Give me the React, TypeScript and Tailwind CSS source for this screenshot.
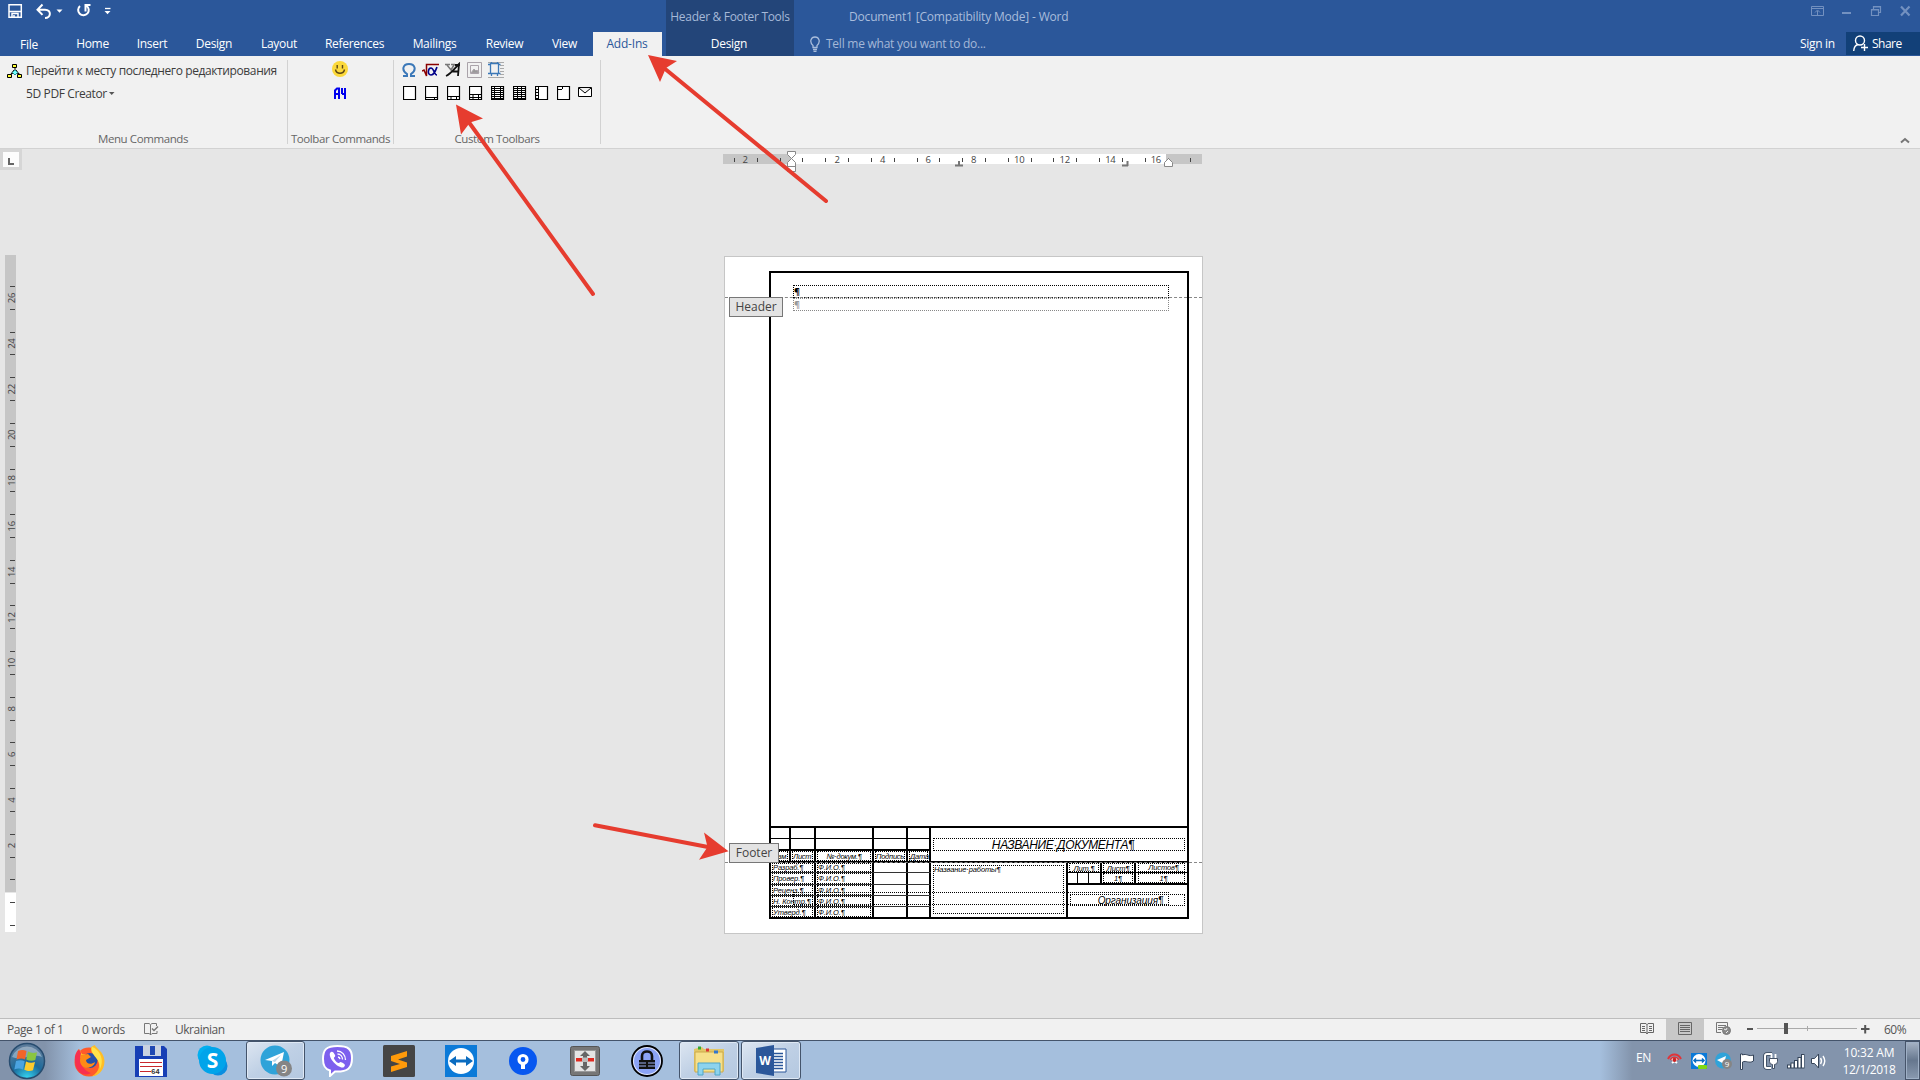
import React from "react";

const UI = "font-['Open_Sans',sans-serif] text-[12px] leading-4 tracking-[-0.3px]";

const tabs: [string, string][] = [
  ["File", "w-[58px] pt-px"],
  ["Home", "w-[68px] pl-px"],
  ["Insert", "w-[52px]"],
  ["Design", "w-[72px]"],
  ["Layout", "w-[58px]"],
  ["References", "w-[93px]"],
  ["Mailings", "w-[67px]"],
  ["Review", "w-[73px]"],
  ["View", "w-[46px] pl-px"],
];

function QuickAccess() {
  return (
    <svg width="120" height="32" className="block shrink-0" fill="none" stroke="#fff">
      <path d="M9 4.700h12.300v12.600H9zM9 11.500h12.300M12 17v-3.500h6V17M14 15v2" strokeWidth="1.500" />
      <path d="M38.500 9.700h6.500c7 0 6 8.300 0 8.300M42.500 4.500l-5 5.200 5 5.200" strokeWidth="2" />
      <path d="M56.500 9.500h6l-3 3.300z" fill="#fff" stroke="none" />
      <path d="M80 6a5.300 5.300 0 1 0 6.500-.3M85.500 11.500V5h5" strokeWidth="2" />
      <path d="M105 8.500h5.500" strokeWidth="1.300" />
      <path d="M104.500 11h6l-3 3.200z" fill="#fff" stroke="none" />
    </svg>
  );
}

function WindowButtons() {
  return (
    <svg width="110" height="32" className="block shrink-0" fill="none" stroke="#7391c0">
      <path d="M1.500 6.500h12v9h-12zM1 8.500h13M7.500 15v-4M5 12.500l2.500-2.500 2.500 2.500" />
      <path d="M32 13h9" strokeWidth="2" />
      <path d="M61.500 9.500h7v6h-7zM63.500 9V6.500h7V12.500H69M61 10h8M63 7h8" strokeWidth="1.200" />
      <path d="M91 6.500l8.500 9M99.500 6.500l-8.500 9" strokeWidth="2.200" />
    </svg>
  );
}

function TitleBar() {
  return (
    <header className="flex h-[56px] bg-[#2b579a] text-white">
      <div className="flex w-[666px] flex-col">
        <QuickAccess />
        <nav className="flex h-6">
          {tabs.map(([t, w]) => (
            <div key={t} className={`${w} flex items-center justify-center`}>{t}</div>
          ))}
          <div className="ml-[6px] flex w-[69px] items-center justify-center bg-[#f1f1f1] pr-px tracking-[-0.2px] text-[#2b579a]">Add-Ins</div>
        </nav>
      </div>
      <div className="flex w-[128px] flex-col items-center bg-[#234579]">
        <div className="flex h-8 items-center whitespace-nowrap pt-[2px] text-[#a6b9d8]">Header &amp; Footer Tools</div>
        <div className="flex h-6 items-center pr-[2px]">Design</div>
      </div>
      <div className="flex grow flex-col pl-4">
        <div className="flex h-8 items-center pl-[39px] pt-[2px] tracking-[-0.18px] text-[#a9bddc]">Document1 [Compatibility Mode] - Word</div>
        <div className="flex h-6 items-center tracking-[-0.25px] text-[#a4b8d8]">
          <svg width="10" height="16" className="mr-[6px]" fill="none" stroke="#a9bddc" strokeWidth="1.300">
            <path d="M3 11.500V9.500C-1 6 1 1 5 1s6 5 2 8.500v2zM3 13.500h4M3.500 15.300h3" />
          </svg>
          Tell me what you want to do...
        </div>
      </div>
      <div className="flex w-[120px] flex-col">
        <div className="flex h-8 pl-[10px]"><WindowButtons /></div>
        <div className="flex h-[23px] items-center">
          <div className="w-[46px] whitespace-nowrap">Sign in</div>
          <div className="flex h-[23px] grow items-center bg-[#124078] pl-[7px] tracking-[-0.5px]">
            <svg width="16" height="17" className="mr-[3px]" fill="none" stroke="#fff" strokeWidth="1.400">
              <circle cx="7" cy="5.500" r="4.500" />
              <path d="M.7 16c.3-4 2-6 4.300-6.500M8 12.500h7M11.500 9v7" />
            </svg>
            Share
          </div>
        </div>
      </div>
    </header>
  );
}

const templates = [
  "",
  "M0 11.500h13M9.500 11.500v3",
  "M0 10.500h13M4 10.500v4M9.500 10.500v4",
  "M0 8.500h13M0 11.500h13M4 8.500v6M9.500 8.500v6",
  "M0 2.500h13M0 4.500h13M0 6.500h13M0 8.500h13M0 10.500h13M0 12.500h13M3.500 0v14M9.500 0v14",
  "M0 2.500h13M0 4.500h13M0 6.500h13M0 8.500h13M0 10.500h13M0 12.500h13M4.500 0v14M8.500 0v14",
  "M3.500 0v14M0 3.500h3M0 6.500h3M0 9.500h3M0 12.500h3",
  "M0 3.500h5M5.500 0v3",
];

function Ribbon() {
  const group = "flex h-[84px] flex-col border-r border-[#d2d2d2]";
  const label = "mt-auto flex h-4 items-center justify-center whitespace-nowrap text-[11.5px] leading-4 tracking-[-0.4px] text-[#666] mb-[-3px]";
  return (
    <section className="flex h-[93px] border-b border-[#d2d2d2] bg-[#f1f1f1] pt-1 text-[#3c3c3c]">
      <div className={`${group} w-[288px]`}>
        <div className="flex h-[22px] items-center pl-[7px]">
          <svg width="16" height="16" className="mr-[3px] -mt-px" stroke="#000" fill="none">
            <path d="M8 5v3M7 7l-3 4M9 7l3 4M3 12l3-2h4l4 2" />
            <path d="M5.500 1.500h4v3h-4zM.5 11.500h4v3h-4zM10.500 11.500h4v3h-4z" fill="#ff3" />
            <path d="M8 7l2.500 2.500L8 12 5.500 9.500z" fill="#7ff" stroke="#299" />
          </svg>
          <span className="whitespace-nowrap tracking-[-0.39px]">Перейти к месту последнего редактирования</span>
        </div>
        <div className="flex h-[24px] items-center pl-[26px] tracking-[-0.38px]">
          5D PDF Creator
          <svg width="6" height="4" className="ml-[2px]"><path d="M0 0h5.500L2.700 3z" fill="#555" /></svg>
        </div>
        <div className={`${label} pr-px`}>Menu Commands</div>
      </div>
      <div className={`${group} w-[106px] items-center`}>
        <svg width="16" height="42" className="mr-px mt-px">
          <circle cx="8" cy="8" r="8" fill="#fcd93b" />
          <path d="M5.200 4v3.500M10.500 4v3.500M3.500 8.500c1 5 8 5 9 0" stroke="#5b4716" strokeWidth="1.400" fill="none" />
          <path d="M3 38V29.500l2-2h2V38M3 33h4M10 27v6M10 33h4M13 27v11" stroke="#00e" strokeWidth="2" fill="none" />
        </svg>
        <div className={label}>Toolbar Commands</div>
      </div>
      <div className={`${group} w-[207px]`}>
        <div className="-mt-px flex h-[22px] items-center gap-[6px] pl-[8px]">
          <svg width="14" height="16"><path d="M1 14h4v-2C-1 8 1 2 7 2s8 6 2 10v2h4" stroke="#3b78b8" strokeWidth="2" fill="none" /></svg>
          <svg width="17" height="16" fill="none">
            <path d="M0 9l2-1 2.500 6V2.500H17" stroke="#8b0000" strokeWidth="1.500" />
            <path d="M15 5c-2 5-3 8-6 8-4 0-3-7 0-7 3 0 3 7 6 7" stroke="#008" strokeWidth="1.600" />
          </svg>
          <svg width="16" height="16" fill="none" stroke="#111">
            <path d="M0 2.500h5M6 2.500h4M2 3l4 5 3-5" stroke="#777" strokeWidth="1.500" />
            <path d="M1 14C6 12 10 6 14 2l-1 12M6 9.500h8M10 3h5" strokeWidth="1.800" />
          </svg>
          <svg width="15" height="16" fill="none" stroke="#aaa3aa"><path d="M.5.500h14v15H.5zM3.500 3.500h8v8h-8z" /><path d="M4 11l3-4 2 2 1-1 2 3z" fill="#999" /></svg>
          <svg width="16" height="16" fill="none"><path d="M0 .5h16M12 3.500h4M12 6.500h4M12 9.500h4M12 12.500h4M0 15.500h16" stroke="#aaa" /><path d="M2.500 1.500h8v10h-8zM0 2.500h2M0 11.500h2M10 2.500h2.500M10 11.500h2.500M3.500 0v1.500M9.500 0v1.500M3.500 12v2M9.500 12v2" stroke="#3b78b8" strokeWidth="1.300" /></svg>
        </div>
        <div className="flex h-[24px] items-center gap-[8px] pl-[9px]">
          {templates.map((d) => (
            <svg key={d} width="14" height="14" className="block" fill="none" stroke="#000">
              <path d="M.5.500h12v13H.5z" fill="#fff" strokeWidth="1.200" />
              <path d={d} />
            </svg>
          ))}
          <svg width="15" height="14" className="-ml-px" fill="#fff" stroke="#000"><path d="M.5 1.500h13v9H.5zM1 2l6 5 6-5" /></svg>
        </div>
        <div className={label}>Custom Toolbars</div>
      </div>
      <svg width="10" height="7" className="ml-auto mr-[10px] mt-[77px]" fill="none" stroke="#777" strokeWidth="2"><path d="M1 5.500L5 2l4 3.500" /></svg>
    </section>
  );
}

function HorizontalRuler() {
  const ticks = Array.from({ length: 21 }, (_, i) => Math.round(11 + i * 22.82));
  const nums: [number, number][] = [[2, 22], ...Array.from({ length: 8 }, (_, i): [number, number] => [i * 2 + 2, 114 + i * 45.55])];
  return (
    <svg width="480" height="24" className="ml-[723px] block">
      <rect y="5" width="479" height="10" fill="#c6c6c6" />
      <rect x="68" y="5" width="375" height="10" fill="#fff" />
      {ticks.map((x) => <rect key={x} x={x} y="9" width="1" height="4" fill="#444" />)}
      {nums.map(([n, x]) => (
        <text key={x} x={x} y="14" textAnchor="middle" fontSize="9.500" fill="#444" fontFamily="Open Sans">{n}</text>
      ))}
      <path d="M64.500 2.500h8v3l-4 4 4 4v9h-8v-9l4-4-4-4zM64.500 17.500h8" fill="#fff" stroke="#888" />
      <path d="M441.500 17.500v-4l4-4 4 4v4z" fill="#fff" stroke="#888" />
      <path d="M232 16.500h8M236 12v4M399 16.500h6M404.500 12v5" stroke="#777" strokeWidth="2" />
    </svg>
  );
}

function VerticalRuler() {
  const ticks = Array.from({ length: 29 }, (_, i) => Math.round(31 + i * 22.82));
  return (
    <svg width="19" height="680" className="ml-[5px] block">
      <rect width="11" height="637" fill="#c6c6c6" />
      <rect y="638" width="11" height="39" fill="#fff" />
      {ticks.map((y) => <rect key={y} x="5" y={y} width="5" height="1" fill="#444" />)}
      {Array.from({ length: 13 }, (_, i) => (
        <text key={i} transform={`translate(10 ${43 + i * 45.65}) rotate(-90)`} textAnchor="middle" fontSize="9.500" fill="#444" fontFamily="Open Sans">{26 - i * 2}</text>
      ))}
    </svg>
  );
}

function Cell({ w, t, center, lead = "leading-[9px]" }: { w: string; t?: string; center?: boolean; lead?: string }) {
  return (
    <div className={`${w} h-full shrink-0 border-r-2 border-black px-[1px]`}>
      {t && (
        <div className={`h-full whitespace-nowrap border border-dotted border-black ${lead} ${center ? "text-center" : ""}`}>{t}</div>
      )}
    </div>
  );
}

function TitleBlock() {
  const rows: [string, string, string][] = [
    ["Разраб.¶", "h-[10px] border-b", "leading-[8px]"],
    ["Провер.¶", "h-[12px] border-b", "leading-[10px]"],
    ["Реценз.¶", "h-[11px] border-b", "leading-[9px]"],
    ["Н. Контр.¶", "h-[11px] border-b", "leading-[9px]"],
    ["Утверд.¶", "h-[10px]", "leading-[9px]"],
  ];
  return (
    <div className="mt-auto flex h-[91px] border-t-2 border-black font-['Liberation_Sans',sans-serif] text-[7.5px] italic tracking-[-0.12px] text-black">
      <div className="w-[160px]">
        <div className="flex h-[11px] border-b border-black"><Cell w="w-[20px]" /><Cell w="w-[25px]" /><Cell w="w-[58px]" /><Cell w="w-[34px]" /><Cell w="w-[23px]" /></div>
        <div className="flex h-[12px] border-b-2 border-black"><Cell w="w-[20px]" /><Cell w="w-[25px]" /><Cell w="w-[58px]" /><Cell w="w-[34px]" /><Cell w="w-[23px]" /></div>
        <div className="flex h-[12px] border-b-2 border-black tracking-[-0.25px]">
          <Cell w="w-[20px]" t="Изм." center /><Cell w="w-[25px]" t="Лист" /><Cell w="w-[58px]" t="№·докум.¶" center /><Cell w="w-[34px]" t="Подпись" /><Cell w="w-[23px]" t="Дата" />
        </div>
        {rows.map(([t, c, lead]) => (
          <div key={t} className={`${c} flex border-[#333]`}>
            <Cell w="w-[45px]" t={t} lead={lead} /><Cell w="w-[58px]" t="Ф.И.О.¶" lead={lead} /><Cell w="w-[34px]" /><Cell w="w-[23px]" />
          </div>
        ))}
      </div>
      <div className="flex w-[256px] flex-col">
        <div className="h-[35px] border-b-2 border-black pl-[2px] pr-[2px] pt-[10px]">
          <div className="h-[13px] border border-dotted border-black pl-[8px] text-center text-[12px] leading-[12px] tracking-[-0.35px]">НАЗВАНИЕ·ДОКУМЕНТА¶</div>
        </div>
        <div className="flex h-[54px]">
          <div className="w-[137px] border-r-2 border-black px-[2px] pb-[3px] pt-[2px]">
            <div className="h-full border border-dotted border-black leading-[8px]">Название·работы¶</div>
          </div>
          <div className="w-[119px]">
            <div className="flex h-[10px] border-b border-black"><Cell w="w-[34px]" t="Лит.¶" center /><Cell w="w-[34px]" t="Лист¶" center /><div className="grow px-[2px]"><div className="h-full border border-dotted border-black pl-1 text-center leading-[8px]">Листов¶</div></div></div>
            <div className="flex h-[12px] border-b-2 border-black">
              <div className="w-[10px] border-r border-black" /><div className="w-[11px] border-r border-black" /><div className="w-[13px] border-r-2 border-black" />
              <Cell w="w-[34px]" t="1¶" center /><div className="grow px-[2px]"><div className="h-full border border-dotted border-black pl-1 text-center leading-[9px]">1¶</div></div>
            </div>
            <div className="px-[2px] pt-[9px]">
              <div className="h-[12px] border border-dotted border-black pl-[6px] text-center text-[10px] leading-[11px] tracking-[-0.1px]">Организация¶</div>
            </div>
          </div>
        </div>
      </div>
    </div>
  );
}

function DocumentPage() {
  const tag = "absolute left-[4px] flex h-5 items-center justify-center border border-[#777] bg-[#e3e3e3] pb-px text-[#444] tracking-[0px]";
  return (
    <div className="relative h-[678px] w-[479px] border border-[#c6c6c6] bg-white pl-[44px] pt-[14px]">
      <div className="flex h-[648px] w-[420px] flex-col border-2 border-black">
        <div className="ml-[22px] mt-[12px] h-[13px] w-[376px] border border-dotted border-black text-[9px] font-bold leading-[12px] text-black">¶</div>
        <div className="ml-[22px] h-[13px] w-[376px] border border-dotted border-[#888] text-[9px] font-bold leading-[12px] text-[#999]">¶</div>
        <TitleBlock />
      </div>
      <div className="absolute left-0 top-[40px] w-full border-t border-dashed border-[#888]" />
      <div className="absolute left-0 top-[605px] w-full border-t border-dashed border-[#888]" />
      <div className="absolute left-[68px] top-[635px] h-[13px] w-[376px] border border-dotted border-black" />
      <div className={`${tag} top-[40px] w-[54px]`}>Header</div>
      <div className={`${tag} top-[586px] w-[50px]`}>Footer</div>
    </div>
  );
}

function StatusBar() {
  return (
    <footer className="flex h-[22px] items-center border-t border-[#bdbdbd] bg-[#f1f1f1] tracking-[-0.2px] text-[#555]">
      <span className="w-[75px] pl-[7px] tracking-[-0.45px]">Page 1 of 1</span>
      <span className="w-[61px] pl-[7px]">0 words</span>
      <svg width="16" height="14" className="-mt-[2px] ml-[7px]" fill="none" stroke="#777"><path d="M7.500 12.500L6 11.500H1.500v-10H6l1.500 1 1.500-1h4.500V4M7.500 3v10M14 9v2.500H9L7.500 13" /><path d="M9 6.500l2 2 4-4" strokeWidth="1.500" /></svg>
      <span className="ml-[16px] tracking-[-0.5px]">Ukrainian</span>
      <div className="ml-auto flex h-full items-center">
        <svg width="14" height="13" className="-mt-[2px] mr-[12px]" fill="none" stroke="#666"><path d="M.5 1.500H6l1 1 1-1h5.500v9H8l-1 1.500-1-1.500H.5zM7 2v10M2 4.500h3M2 6.500h3M2 8.500h3M9 4.500h3M9 6.500h3M9 8.500h3" /></svg>
        <div className="flex h-full w-[38px] items-center justify-center bg-[#c8c8c8] pb-[2px]">
          <svg width="14" height="13" fill="none" stroke="#666"><path d="M.5.500h13v12H.5zM2 3.500h10M2 5.500h10M2 7.500h10M2 9.500h10" /></svg>
        </div>
        <svg width="15" height="13" className="-mt-[2px] ml-[12px] mr-[16px]" fill="none" stroke="#777"><path d="M5 10.500H.5V.5h11V5M2 3.500h8M2 5.500h5M2 7.500h4" /><circle cx="10.500" cy="8.500" r="4" fill="#888" stroke="#777" /><path d="M8 7l2 1 1-2M10 11l2-2" stroke="#eee" /></svg>
        <svg width="124" height="14" className="-mt-px mr-[13px]">
          <path d="M0 7h6M114 7h8.500M118.200 3v8.500" stroke="#555" strokeWidth="2" />
          <path d="M10 6.500h100M60.500 4v5" stroke="#aaa" />
          <rect x="37" y="1" width="4" height="11" fill="#555" />
        </svg>
        <span className="w-[36px] tracking-[-0.5px]">60%</span>
      </div>
    </footer>
  );
}

function AppButton({ active, w, children }: { active?: boolean; w: string; children: React.ReactNode }) {
  return (
    <div className={`${w} flex h-[39px] shrink-0 items-center justify-center ${active ? "rounded-[3px] border border-[#44546b] bg-gradient-to-br from-[#dde6f1] via-[#bfd0e5] to-[#b4c8e0] shadow-[inset_0_0_0_1px_#dfe9f5]" : ""}`}>{children}</div>
  );
}

function Taskbar() {
  return (
    <div className="flex h-[40px] items-center border-t border-[#44546b] bg-[linear-gradient(90deg,#8293ab_0px,#8293ab_45px,#a5bfdd_80px,#a5bfdd_1600px,#8394ac_1632px)]">
      <AppButton w="w-[54px]">
        <svg width="38" height="38" viewBox="0 0 38 38">
          <defs>
            <radialGradient id="orb" cx=".5" cy="1" r=".9"><stop offset="0" stopColor="#36d9f5" /><stop offset=".5" stopColor="#1b6a9b" /><stop offset="1" stopColor="#5a7b9b" /></radialGradient>
          </defs>
          <circle cx="19" cy="19" r="17.500" fill="url(#orb)" stroke="#284d70" strokeWidth="1.500" />
          <path d="M4 15a16 16 0 0 1 30 0c-9-4-20 4-30 0z" fill="#fff" opacity=".35" />
          <path d="M10 9c3-1.500 6-1.500 8.500 0L17 17.500c-3-1.500-5.500-1-8.500 0z" fill="#f0652a" />
          <path d="M20 9.500c3 1.700 6 2 9 .7L27.300 18c-3 1.300-6 1-9-.5z" fill="#8ac640" />
          <path d="M8 19c3-1 6-1.300 8.700.3L15 27.500c-3-1.500-5.500-1.300-8.700 0z" fill="#4ba3e0" />
          <path d="M18 19.500c3 1.500 6 1.800 9 .5L25 28.300c-3 1.200-5.500 1-8.700-.6z" fill="#fccb2e" />
        </svg>
      </AppButton>
      <AppButton w="w-[70px]">
        <svg width="31" height="32" viewBox="0 0 31 32">
          <circle cx="15" cy="17" r="14.500" fill="#ff5a2b" />
          <path d="M1 15C1 9 3 6 5 4l3 5 7 1zM17 3C17 1 20 1 21 0c0 3 9 6 9.500 16 0 9-6 15-13 15.500 9-5 9-13 5-18-3-4-6-6-5.500-10.500z" fill="#ffbd26" />
          <path d="M1 16C0 10 3 6 5 4l2 4c-2 10 2 17 10 20-9 5-16-3-16-12z" fill="#f7304f" />
          <circle cx="16" cy="15.500" r="7.500" fill="#2451a8" />
          <path d="M7 10l7-1 3 3-5 3c0 4 5 5 9 2-1 7-15 9-15-2z" fill="#ff8a16" />
          <path d="M18 2c7 2 13 12 8 22 1-11-10-13-8-22z" fill="#ffe34a" />
        </svg>
      </AppButton>
      <AppButton w="w-[54px]">
        <svg width="32" height="32"><path d="M0 1h29l3 3v28H0z" fill="#173fb5" /><path d="M8 0h18v11H8z" fill="#c9d2e1" /><path d="M15 1h5v9h-5z" fill="#2048b2" /><path d="M4 14h24v17H4z" fill="#fff" /><path d="M5 17.500h22M5 21.500h22M5 26.500h11" stroke="#c8272c" /><text x="16" y="29" fontSize="7.500" fontFamily="Liberation Mono" fontWeight="bold" fill="#333">64</text></svg>
      </AppButton>
      <AppButton w="w-[68px]">
        <svg width="31" height="31"><circle cx="10" cy="10" r="9.500" fill="#00aff0" /><circle cx="21" cy="21" r="9.500" fill="#0a8ee0" /><circle cx="15.500" cy="15.500" r="13.500" fill="#00a4ea" /><text x="15.500" y="23" textAnchor="middle" fontSize="21" fontWeight="bold" fontFamily="Open Sans" fill="#fff">S</text></svg>
      </AppButton>
      <AppButton w="w-[59px]" active>
        <svg width="32" height="32"><circle cx="15" cy="15" r="14.500" fill="#2fa3d9" /><path d="M5 15l19-8-3 15-6-4-3 3v-5z" fill="#fff" /><path d="M12 16l9-6-6 7z" fill="#b8d6ea" /><circle cx="24" cy="23.500" r="8" fill="#858585" /><text x="24" y="28" textAnchor="middle" fontSize="11" fontFamily="Open Sans" fill="#fff">9</text></svg>
      </AppButton>
      <AppButton w="w-[64px]">
        <svg width="31" height="32"><path d="M15.500 1C4 1 1 5 1 14c0 7 2 10 7 11.500V31l5-4.500C26 27 30 23 30 13 30 4 26 1 15.500 1z" fill="#7d60ee" stroke="#fff" strokeWidth="2" /><path d="M8 8c2-3 4 0 5 2s-1.500 2-1 3.500 3 4.500 4.500 4.500 1-2 3.500-.5 4 2.500 2 4.500C18 25 6 14 8 8z" fill="#fff" /><path d="M15 6c5 0 8.500 4 8.500 9M15.500 9c3 0 5 2.500 5 5.500M16 12c1.200.2 1.800 1 2 2.200" fill="none" stroke="#fff" strokeWidth="1.300" /></svg>
      </AppButton>
      <AppButton w="w-[60px]">
        <svg width="32" height="32"><rect width="32" height="32" rx="1.500" fill="#454545" /><path d="M8 11L24 6v5.500L15 14.500l9 3V22L8 27v-5.500l9-2.500-9-3z" fill="#ff9a0a" /></svg>
      </AppButton>
      <AppButton w="w-[64px]">
        <svg width="32" height="32"><rect width="32" height="32" fill="#0b7ad8" /><circle cx="16" cy="16" r="13" fill="#fff" /><path d="M4 16l7-5v3.500h10V11l7 5-7 5v-3.500H11V21z" fill="#0b6cc0" /></svg>
      </AppButton>
      <AppButton w="w-[60px]">
        <svg width="28" height="28"><circle cx="14" cy="14" r="14" fill="#0757f0" /><path d="M12 16.500h4V22h-4z" fill="#fff" /><circle cx="14" cy="12.500" r="4" fill="none" stroke="#fff" strokeWidth="3.200" /></svg>
      </AppButton>
      <AppButton w="w-[64px]">
        <svg width="30" height="30"><rect x=".5" y=".5" width="29" height="29" rx="2" fill="#777" stroke="#555" /><rect x="4.500" y="4.500" width="21" height="21" fill="#e4e4e4" stroke="#999" /><path d="M15 5l5 5h-3v10h3l-5 5-5-5h3V10h-3z" fill="#666" /><rect x="6" y="12" width="18" height="3.500" fill="#e02a20" /><rect x="12" y="11.500" width="6" height="4.500" fill="#bbb" /></svg>
      </AppButton>
      <AppButton w="w-[60px]">
        <svg width="32" height="32"><circle cx="16" cy="16" r="15" fill="#dfe6fd" stroke="#000" strokeWidth="1.800" /><circle cx="16" cy="16" r="13" fill="#8ba3f5" /><path d="M11 15v-4c0-6 10-6 10 0v4" fill="none" stroke="#111" strokeWidth="2.600" /><path d="M8 15h16v9H8z" fill="#111" /><path d="M8 18h7M17 18h7M8 21h7M17 21h7" stroke="#9db0f4" /></svg>
      </AppButton>
      <div className="w-[2px]" />
      <AppButton w="w-[60px]" active>
        <svg width="34" height="32"><path d="M2 4l8-2 2 2h20v22H2z" fill="#e3c766" /><path d="M3 7h28v20H3z" fill="#f6e08a" stroke="#cba94a" /><path d="M6 3h3" stroke="#3a3" strokeWidth="3" /><path d="M14 5h3" stroke="#d33" strokeWidth="3" /><path d="M22 7h4" stroke="#37c" strokeWidth="3" /><path d="M6 30V18h22v12h-5v-6H11v6z" fill="#8dd3ee" stroke="#4fa5c8" /></svg>
      </AppButton>
      <div className="w-[2px]" />
      <AppButton w="w-[60px]" active>
        <svg width="31" height="31"><path d="M15 4h15v23H15z" fill="#fff" stroke="#2b579a" /><path d="M18 8.500h9M18 11.500h9M18 14.500h9M18 17.500h9M18 20.500h9M18 23.500h9" stroke="#2b579a" strokeWidth="1.300" /><path d="M0 3l18-3v31L0 28z" fill="#2b579a" /><text x="9" y="20" textAnchor="middle" fontFamily="Open Sans" fontWeight="bold" fontSize="12" fill="#fff">W</text></svg>
      </AppButton>
      <div className="ml-auto flex h-full items-center text-white">
        <span className="w-[31px] pb-[6px]">EN</span>
        <svg width="164" height="20" className="mr-[8px]" fill="none">
          <path d="M1 8C4 2 11 2 14 8M3.500 9c2-3.500 6-3.500 8 0" stroke="#e0343a" strokeWidth="2" /><path d="M5 8l5 4M5 12l5-4" stroke="#fff" strokeWidth="2" /><circle cx="7.500" cy="9" r="2" fill="#c22" />
          <rect x="24" y="2" width="16" height="16" fill="#0b7ad8" /><circle cx="32" cy="9.500" r="6.500" fill="#fff" /><path d="M27 9.500h10M29 7.500l-2 2 2 2M35 7.500l2 2-2 2" stroke="#0b6cc0" strokeWidth="1.500" /><rect x="31" y="14" width="9" height="4" rx="1" fill="#80d812" />
          <circle cx="56" cy="9.500" r="8" fill="#2fa3d9" /><path d="M50 9l9-4-2 8z" fill="#fff" /><circle cx="60" cy="13" r="5" fill="#858585" /><text x="60" y="16" textAnchor="middle" fontSize="8" fontFamily="Open Sans" fill="#fff">9</text>
          <path d="M73.500 3v15.500h2V11c4-2 6 2 11-1V4c-5 2-7-2-11 0V3z" fill="#fff" stroke="#354459" />
          <path d="M105 3h-5q-2 0-2 2v10q0 2 2 2h4" stroke="#354459" strokeWidth="3.600" /><path d="M105 3h-5q-2 0-2 2v10q0 2 2 2h4" stroke="#fff" strokeWidth="2" /><path d="M102.500 7.500h8v3q0 3-3 3v4h-2v-4q-3 0-3-3z" fill="#fff" stroke="#354459" strokeWidth=".9" /><path d="M104.500 3v4M108.500 3v4" stroke="#fff" strokeWidth="1.800" />
          <path d="M120 13.500v4h3.500v-4zM123.500 11.500v6h3.500v-6zM127 9v8.500h3.500V9zM130.500 6v11.500h3.500V6zM134 3v14.500h3.500V3z" fill="#354459" /><path d="M121 14.500v2h2v-2zM124.500 12.500v4h2v-4zM128 10v6.500h2V10zM131.500 7v9.500h2V7zM135 4v12.500h2V4z" fill="#fff" />
          <path d="M144.500 7.500h3l4-4.500v14l-4-4.500h-3z" fill="#fff" stroke="#354459" /><path d="M153.500 7q2 3 0 6M156 5q3.500 5 0 10" stroke="#fff" strokeWidth="1.400" />
        </svg>
        <div className="flex w-[60px] flex-col items-center text-[12px] leading-[17px] tracking-[-0.2px]">
          <span>10:32 AM</span>
          <span className="tracking-[-0.45px]">12/1/2018</span>
        </div>
        <div className="ml-[6px] h-[39px] w-[15px] border border-[#46546a] bg-gradient-to-b from-[#a7b4c6] via-[#66778e] to-[#8a9ab0] shadow-[inset_0_0_0_1px_#9fb0c6]" />
      </div>
    </div>
  );
}

function Arrows() {
  return (
    <svg width="1920" height="1080" className="pointer-events-none absolute left-0 top-0" fill="#e63c2f" stroke="#e63c2f">
      <path d="M826 201L664 68M593 294L468 121M595 825.300L708 847" strokeWidth="4" strokeLinecap="round" />
      <path d="M648 55l29 6-11 7-6 14zM456 104.500l27 14-13 4-9 12zM728.500 851.300L704 832.500l3.500 14.500-8.500 12.700z" stroke="none" />
    </svg>
  );
}

export default function App() {
  return (
    <div className={`${UI} relative flex h-[1080px] w-[1920px] flex-col overflow-hidden bg-[#e6e6e6]`}>
      <TitleBar />
      <Ribbon />
      <div className="flex h-[107px] items-start">
        <div className="flex h-[21px] w-[22px] items-center bg-[#d6d6d6] pl-[3px]">
          <div className="flex h-[15px] w-4 items-center justify-center bg-[#fcfcfc] pt-1">
            <svg width="6" height="7"><path d="M1 0v6h5" stroke="#666" strokeWidth="2" fill="none" /></svg>
          </div>
        </div>
        <div className="-ml-[22px]"><HorizontalRuler /></div>
      </div>
      <div className="flex grow items-start">
        <div className="-mt-px"><VerticalRuler /></div>
        <div className="ml-[700px]"><DocumentPage /></div>
      </div>
      <StatusBar />
      <Taskbar />
      <Arrows />
    </div>
  );
}
